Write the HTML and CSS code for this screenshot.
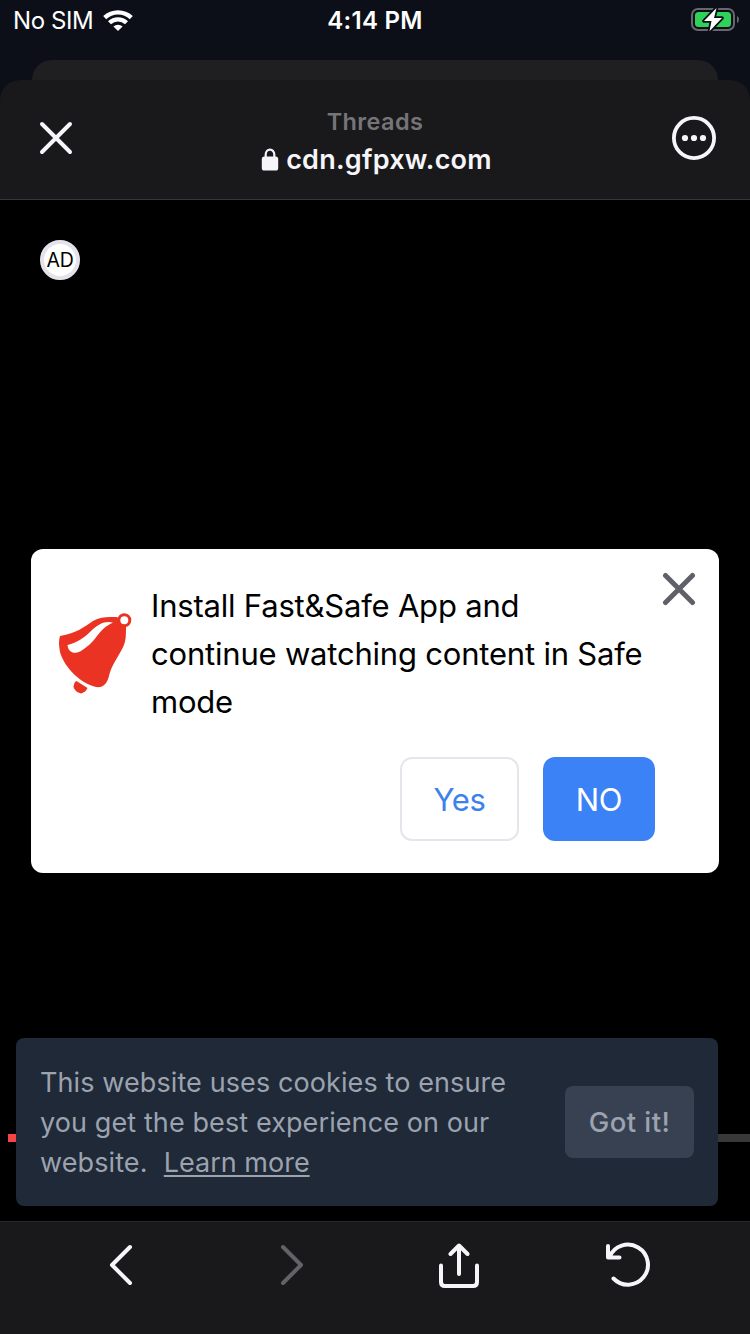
FILE: index.html
```html
<!DOCTYPE html>
<html lang="en">
<head>
<meta charset="utf-8">
<title>cdn.gfpxw.com</title>
<link rel="stylesheet" href="styles.css">
</head>
<body>
<div class="screen">
  <div class="status">
    <div class="status-left">
      <span class="carrier">No SIM</span>
      <svg class="wifi" width="30" height="22" viewBox="0 0 30 22">
        <path d="M15 22l4.600-4.500a6.600 6.600 0 0 0-9.200 0z"/>
        <path d="M8 15.300a10.200 10.200 0 0 1 14 0l3-3.100a14.600 14.600 0 0 0-20 0z"/>
        <path d="M3.200 10.300a17 17 0 0 1 23.600 0l3-3.300a21.600 21.600 0 0 0-29.600 0z"/>
      </svg>
    </div>
    <span class="clock">4:14 PM</span>
    <svg class="battery" width="50" height="26" viewBox="0 0 50 26">
      <rect x="2" y="3" width="42" height="21" rx="6" fill="none" stroke="#66686d" stroke-width="2"/>
      <path d="M47 10q2 .8 2 3.500t-2 3.500z" fill="#66686d"/>
      <rect x="5" y="6" width="36" height="15" rx="3.500" fill="#30d158"/>
      <path d="M26.500 2L14 15h7.500L19.500 25.200 32 12h-8z" fill="#fff" stroke="#0c0f17" stroke-width="3.600" stroke-linejoin="round" paint-order="stroke"/>
    </svg>
  </div>
  <div class="back-sheet"></div>
  <header class="header">
    <svg class="line-icon" width="34" height="34" viewBox="0 0 34 34"><path d="M3 3l28 28M31 3L3 31"/></svg>
    <div class="titles">
      <div class="app">Threads</div>
      <div class="host">
        <svg width="18" height="23" viewBox="0 0 18 23"><path d="M4.700 11V6.500a4.300 4.800 0 0 1 8.600 0V11" fill="none" stroke="#f5f5fa" stroke-width="2.200"/><rect x=".8" y="8.500" width="16.400" height="14" rx="2.600" fill="#f5f5fa"/></svg>
        <span class="domain">cdn.gfpxw.com</span>
      </div>
    </div>
    <svg width="44" height="44" viewBox="0 0 44 44" fill="#f5f5fa"><circle cx="22" cy="22" r="20.100" fill="none" stroke="#f5f5fa" stroke-width="3.800"/><circle cx="13" cy="22" r="3.100"/><circle cx="22" cy="22" r="3.100"/><circle cx="31" cy="22" r="3.100"/></svg>
  </header>
  <main class="page">
    <div class="progress"></div>
    <div class="ad">AD</div>
    <section class="dialog">
      <div class="message">
        <svg class="bell" width="76" height="84" viewBox="0 0 76 84">
          <path fill="#eb3323" d="M3 23C20 20 27 14 36 8C44 3 52 4 60 4L69 14C69 24 69 30 64 38C59 47 54 54 52 63C50 71 46 75 39 74C21 70 6 51 3 39Q1 29 3 23z"/>
          <path fill="#fff" d="M10.500 32C20 30 28 24 34 18C41 11 48 7.500 56 9.500C48 13 44 18 40 23C35 30 30 34 24 38C17 42 11 39 10.500 32z"/>
          <circle cx="67.300" cy="7.200" r="5.500" fill="#fff" stroke="#eb3323" stroke-width="3"/>
          <path fill="#eb3323" d="M19.500 68L30.500 75Q29 79 24 80.500Q18 79 16.500 74Q17 69 19.500 68z"/>
        </svg>
        <p class="question">Install Fast&amp;Safe App and<br>continue watching content in Safe<br>mode</p>
        <svg class="close" width="34" height="34" viewBox="0 0 34 34"><path d="M3.500 3.500l27 27M30.500 3.500l-27 27"/></svg>
      </div>
      <div class="actions">
        <button class="btn yes">Yes</button>
        <button class="btn no">NO</button>
      </div>
    </section>
    <section class="cookies">
      <p class="notice">This website uses cookies to ensure<br>you get the best experience on our<br>website. <a class="learn">Learn more</a></p>
      <button class="got">Got it!</button>
    </section>
  </main>
  <nav class="toolbar">
    <svg class="line-icon" width="24" height="42" viewBox="0 0 24 42"><path d="M21 3L3 21l18 18"/></svg>
    <svg class="line-icon off" width="24" height="42" viewBox="0 0 24 42"><path d="M3 3l18 18L3 39"/></svg>
    <svg class="line-icon" width="42" height="46" viewBox="0 0 42 46"><path d="M3 23.500V40q0 4 4 4h28q4 0 4-4V23.500M21 32V4M12.500 12L21 3.500l8.500 8.500"/></svg>
    <svg class="line-icon" width="46" height="46" viewBox="0 0 46 46"><path d="M3 4v11.500h11.500M4.500 15A20 20 0 1 1 8.500 36.500"/></svg>
  </nav>
</div>
</body>
</html>
```
FILE: styles.css
```css
* { box-sizing: border-box; }
body { margin: 0; background: #000; font-family: Inter, "Liberation Sans", sans-serif; }
p { margin: 0; }
svg { display: block; flex: none; }
button { font-family: inherit; padding: 0; border: 0; }
.screen { width: 750px; height: 1334px; display: flex; flex-direction: column; overflow: hidden; background: #0c0f17; }
.status { height: 60px; flex: none; padding: 0 10px; display: grid; grid-template-columns: 1fr auto 1fr; align-items: start; color: #fff; font-size: 24px; line-height: 42px; }
.status-left { display: flex; gap: 10px; padding-left: 3px; }
.carrier { letter-spacing: -0.4px; }
.wifi { margin-top: 9px; fill: #fff; }
.clock { font-weight: 600; letter-spacing: 0.3px; }
.battery { justify-self: end; margin-top: 6px; }
.back-sheet { height: 20px; flex: none; margin: 0 32px; background: #1f1f21; border-radius: 20px 20px 0 0; }
.header { height: 120px; padding: 0 34px 4px 39px; display: grid; grid-template-columns: 1fr auto 1fr; align-items: center; background: #19191b; border-bottom: 1px solid #37373a; border-radius: 20px 20px 0 0; flex: none; }
.header > svg:last-child { justify-self: end; }
.titles { display: flex; flex-direction: column; align-items: center; padding-top: 7px; margin: 0 3px 0 -3px; }
.app { color: #757579; font-size: 23.500px; line-height: 38px; font-weight: 600; letter-spacing: 0.4px; margin-left: 1px; }
.host { display: flex; align-items: center; gap: 7px; color: #f5f5fa; font-size: 27px; line-height: 38px; font-weight: 600; letter-spacing: 0.25px; margin-left: 4px; }
.host svg { margin-top: -2px; }
.line-icon { fill: none; stroke: #f5f5fa; stroke-width: 4; stroke-linecap: round; stroke-linejoin: round; }
.off { stroke: #646266; }
.page { position: relative; flex: 1; display: flex; flex-direction: column; padding: 40px 31px 0; background: #000; }
.progress { position: absolute; left: 8px; right: 0; top: 934px; height: 8px; background: linear-gradient(90deg, #f34446 0 8px, #383838 8px); }
.ad { width: 40px; height: 40px; margin-left: 9px; border: 4px solid #e4e3eb; border-radius: 50%; background: #fff; color: #000; font-size: 19.500px; line-height: 33px; letter-spacing: -0.3px; display: flex; justify-content: center; }
.dialog { height: 324px; margin-top: 269px; padding: 24px 23px 0 26px; border-radius: 12px; background: #fff; }
.message { display: flex; height: 153px; }
.bell { margin: 40px 18px 0 0; }
.question { flex: 1; font-size: 31px; line-height: 48px; letter-spacing: -0.2px; padding-top: 9px; white-space: nowrap; color: #000; }
.close { fill: none; stroke: #606168; stroke-width: 5; stroke-linecap: round; margin: -1px 0 0 -3px; }
.actions { display: flex; justify-content: flex-end; gap: 24px; margin-top: 31px; padding-right: 41px; }
.btn { height: 84px; border-radius: 12px; font-size: 31px; letter-spacing: -0.3px; padding-top: 1px; }
.yes { width: 119px; border: 2px solid #e5e5eb; background: #fff; color: #3d81ec; }
.no { width: 112px; background: #3b82f6; color: #fff; }
.cookies { position: relative; width: 702px; height: 168px; margin: 165px 0 0 -15px; padding: 26px 24px 24px; display: flex; justify-content: space-between; align-items: flex-start; border-radius: 8px; background: #1f2937; }
.notice { color: #9ca3af; font-size: 27px; line-height: 40px; white-space: nowrap; letter-spacing: 0.1px; margin-top: -1px; }
.learn { margin-left: 8.500px; letter-spacing: 0; text-decoration: underline; text-decoration-thickness: 2px; text-underline-offset: 3px; }
.got { width: 129px; height: 72px; margin-top: 22px; border-radius: 8px; background: #374151; color: #9ca3af; font-size: 27.500px; font-weight: 500; letter-spacing: 0.4px; }
.toolbar { height: 113px; flex: none; border-top: 1px solid #29292b; background: #19191b; display: grid; grid-template-columns: repeat(4, 169px); justify-items: center; align-items: center; padding: 0 38px 26px 36px; }
.toolbar .off { margin-left: 4px; }
```
